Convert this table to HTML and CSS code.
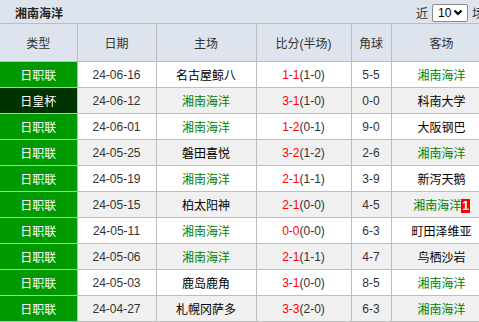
FILE: index.html
```html
<!DOCTYPE html>
<html lang="zh-CN">
<head>
<meta charset="utf-8">
<link rel="stylesheet" href="styles.css">
</head>
<body>
<div class="page">
  <div class="titlebar">
    <span class="title">湘南海洋</span>
    <span class="recent">近 <span class="sel"><span>10</span><svg width="10" height="7" viewBox="0 0 10 7"><path d="M1.5 1.5 L5 5 L8.5 1.5" fill="none" stroke="#000" stroke-width="2.2"/></svg></span> 场</span>
  </div>
  <table class="tbl">
    <colgroup><col class="c1"><col class="c2"><col class="c3"><col class="c4"><col class="c5"><col class="c6"></colgroup>
    <thead>
      <tr><th>类型</th><th>日期</th><th>主场</th><th>比分(半场)</th><th>角球</th><th>客场</th></tr>
    </thead>
    <tbody>
      <tr><td class="lg">日职联</td><td>24-06-16</td><td>名古屋鲸八</td><td><span class="sc">1-1</span>(1-0)</td><td>5-5</td><td class="me">湘南海洋</td></tr>
      <tr><td class="cup">日皇杯</td><td>24-06-12</td><td class="me">湘南海洋</td><td><span class="sc">3-1</span>(1-0)</td><td>0-0</td><td>科南大学</td></tr>
      <tr><td class="lg">日职联</td><td>24-06-01</td><td class="me">湘南海洋</td><td><span class="sc">1-2</span>(0-1)</td><td>9-0</td><td>大阪钢巴</td></tr>
      <tr><td class="lg">日职联</td><td>24-05-25</td><td>磐田喜悦</td><td><span class="sc">3-2</span>(1-2)</td><td>2-6</td><td class="me">湘南海洋</td></tr>
      <tr><td class="lg">日职联</td><td>24-05-19</td><td class="me">湘南海洋</td><td><span class="sc">2-1</span>(1-1)</td><td>3-9</td><td>新泻天鹅</td></tr>
      <tr><td class="lg">日职联</td><td>24-05-15</td><td>柏太阳神</td><td><span class="sc">2-1</span>(0-0)</td><td>4-5</td><td class="me">湘南海洋<span class="badge">1</span></td></tr>
      <tr><td class="lg">日职联</td><td>24-05-11</td><td class="me">湘南海洋</td><td><span class="sc">0-0</span>(0-0)</td><td>6-3</td><td>町田泽维亚</td></tr>
      <tr><td class="lg">日职联</td><td>24-05-06</td><td class="me">湘南海洋</td><td><span class="sc">2-1</span>(1-1)</td><td>4-7</td><td>鸟栖沙岩</td></tr>
      <tr><td class="lg">日职联</td><td>24-05-03</td><td>鹿岛鹿角</td><td><span class="sc">3-1</span>(0-0)</td><td>8-5</td><td class="me">湘南海洋</td></tr>
      <tr><td class="lg">日职联</td><td>24-04-27</td><td>札幌冈萨多</td><td><span class="sc">3-3</span>(2-0)</td><td>6-3</td><td class="me">湘南海洋</td></tr>
    </tbody>
  </table>
</div>
</body>
</html>
```

FILE: styles.css
```css
html, body {
  margin: 0;
  padding: 0;
  background: #fff;
  overflow: hidden;
}
.page {
  width: 492px;
  font-family: "Liberation Sans", "Noto Sans CJK SC", sans-serif;
  font-size: 12px;
  color: #333;
}
.titlebar {
  height: 21px;
  padding: 2px 0 0 15px;
  background: #dde4ee;
  border-bottom: 1px solid #bdbdbd;
  display: flex;
  align-items: center;
  justify-content: space-between;
}
.title {
  font-weight: bold;
  font-size: 12px;
  color: #222;
}
.recent {
  display: flex;
  align-items: center;
  gap: 4px;
  margin-right: 8px;
  color: #333;
}
.sel {
  display: inline-flex;
  align-items: center;
  justify-content: space-between;
  box-sizing: border-box;
  height: 18px;
  width: 36px;
  padding: 0 4px 0 5px;
  border: 1px solid #8a8a8a;
  border-radius: 2px;
  background: #fff;
  color: #000;
  font-size: 12px;
}
.tbl {
  width: 492px;
  border-collapse: collapse;
  table-layout: fixed;
}
.c1 { width: 77px; }
.c2 { width: 79px; }
.c3 { width: 100px; }
.c4 { width: 95px; }
.c5 { width: 40px; }
.c6 { width: 101px; }
.tbl th {
  height: 37px;
  background: #dde4ee;
  font-weight: normal;
  color: #333;
  border: 1px solid #bdbdbd;
  border-top: none;
  padding: 0;
  text-align: center;
}
.tbl td {
  height: 25px;
  border: 1px solid #bdbdbd;
  padding: 0;
  text-align: center;
  white-space: nowrap;
}
.tbl tr > :first-child { border-left: none; }
.tbl tbody tr:nth-child(even) td { background: #f0f0f0; }
.tbl tbody tr td.lg { background: #009900; color: #fff; }
.tbl tbody tr td.cup { background: #003300; color: #fff; }
.me { color: #008000; }
.tbl td:nth-child(3):not(.me), .tbl td:nth-child(6):not(.me) { color: #000; }
.sc { color: #ff0000; }
.badge {
  display: inline-block;
  background: #ff0000;
  color: #fff;
  font-weight: bold;
  padding: 0 1px;
  line-height: 14px;
}
```
